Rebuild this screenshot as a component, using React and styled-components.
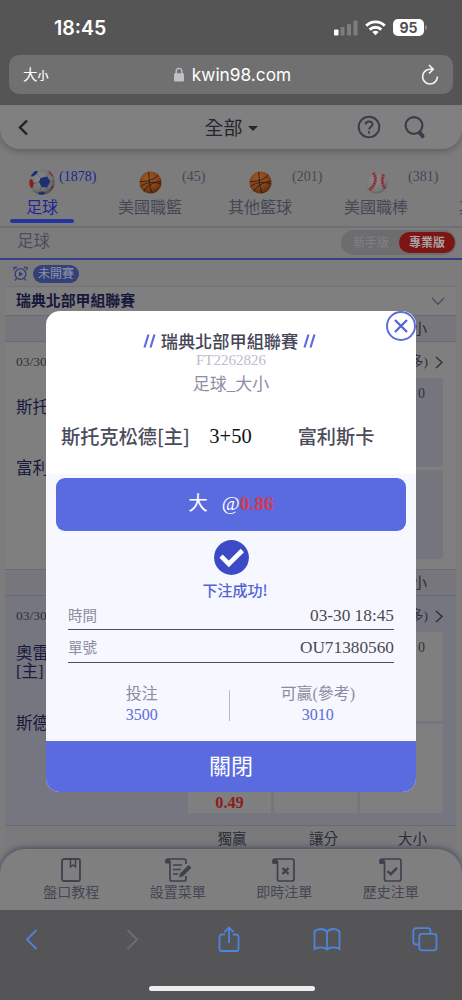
import React from "react";
import styled, { createGlobalStyle } from "styled-components";

export default function App() {
  const sports = [
    { name: "足球", count: 1878, ball: <SoccerBall />, gap: 44, active: true },
    { name: "美國職籃", count: 45, ball: <BasketBall />, gap: 46 },
    { name: "其他籃球", count: 201, ball: <BasketBall />, gap: 52 },
    { name: "美國職棒", count: 381, ball: <BaseBall />, gap: 51 },
    { name: "其他棒球", gap: 0 },
  ];

  const menus = [
    { name: "盤口教程", icon: <GuideIcon /> },
    { name: "設置菜單", icon: <EditIcon /> },
    { name: "即時注單", icon: <ScrollIcon mark="M12.500 11l6 6M18.500 11l-6 6" /> },
    { name: "歷史注單", icon: <ScrollIcon mark="M10.500 14l3.300 3.200 6.200-6.400" /> },
  ];

  return (
    <Phone>
      <GlobalStyle />
      <StatusBar>
        <Clock>18:45</Clock>
        <SignalGroup>
          <SignalIcon />
          <WifiIcon />
          <Battery>95</Battery>
        </SignalGroup>
      </StatusBar>
      <AddressWrap>
        <AddressBar>
          <TextSize>
            大<small>小</small>
          </TextSize>
          <Domain>
            <LockIcon />
            kwin98.com
          </Domain>
          <ReloadIcon />
        </AddressBar>
      </AddressWrap>

      <Site>
        <TopBar>
          <svg width="12" height="17" viewBox="0 0 12 17" fill="none" stroke="#20212b" strokeWidth="2.4">
            <path d="M10 1.5L3 8.5l7 7" />
          </svg>
          <TopTitle>
            全部
            <Caret />
          </TopTitle>
          <TopIcons>
            <HelpIcon />
            <SearchIcon />
          </TopIcons>
        </TopBar>

        <SportTabs>
          {sports.map((sport) => (
            <SportTab key={sport.name} $gap={sport.gap} $active={sport.active}>
              <BallBox>{sport.ball}</BallBox>
              {sport.name}
              {sport.count && <Count $active={sport.active}>({sport.count})</Count>}
            </SportTab>
          ))}
        </SportTabs>

        <SportHead>
          足球
          <Switch>
            <SwitchItem>新手版</SwitchItem>
            <SwitchItem $on>專業版</SwitchItem>
          </Switch>
        </SportHead>

        <StateRow>
          <AlarmIcon />
          <StatePill>未開賽</StatePill>
        </StateRow>
        <League>
          瑞典北部甲組聯賽
          <svg width="14" height="9" viewBox="0 0 14 9" fill="none" stroke="#4c4d5e" strokeWidth="1.3">
            <path d="M1 1l6 6.3L13 1" />
          </svg>
        </League>

        <ColumnHead />
        <Match home="斯托克松德" away="富利斯卡" />
        <ColumnHead />
        <Match home="奧雷布洛" host away="斯德哥爾摩" odds="0.49" tinted />
        <ColumnHead last />

        <BottomMenu>
          {menus.map((menu) => (
            <MenuItem key={menu.name}>
              {menu.icon}
              {menu.name}
            </MenuItem>
          ))}
        </BottomMenu>
      </Site>

      <Toolbar>
        <ToolIcons>
          <svg width="13" height="21" viewBox="0 0 13 21" stroke="#4d84dc">
            <path d="M11.5 1L2 10.5l9.5 9.5" />
          </svg>
          <svg width="13" height="21" viewBox="0 0 13 21" stroke="#6f6f72">
            <path d="M1.5 1l9.5 9.5L1.5 20" />
          </svg>
          <svg width="22" height="27" viewBox="0 0 22 27" stroke="#4d84dc">
            <path d="M7 8.5H3.5a2 2 0 00-2 2V23a2 2 0 002 2h15a2 2 0 002-2V10.500a2 2 0 00-2-2H15M11 17V1.800M6.500 6L11 1.500 15.500 6" />
          </svg>
          <svg width="28" height="23" viewBox="0 0 28 23" stroke="#4d84dc">
            <path d="M14 4C12.500 2 10.500 1 7.800 1S3 2 1.500 3.500V21c1.500-1 3.500-1.700 6-1.700s5 .7 6.500 2.200c1.500-1.500 4-2.200 6.500-2.200s4.500.7 6 1.700V3.500C25 2 22.900 1 20.200 1S15.500 2 14 4zM14 4v17" />
          </svg>
          <svg width="26" height="25" viewBox="0 0 26 25" stroke="#4d84dc">
            <path d="M7 17.500H4.300a3 3 0 01-3-3V4.200a3 3 0 013-3h11.200a3 3 0 013 3v2.300" />
            <rect x="7.300" y="6.800" width="17.200" height="16.500" rx="2.500" />
          </svg>
        </ToolIcons>
        <HomeBar />
      </Toolbar>

      <Modal>
        <CloseButton>
          <svg width="14" height="14" viewBox="0 0 14 14" stroke="#5163d4" strokeWidth="2.2">
            <path d="M1 1l12 12M13 1L1 13" />
          </svg>
        </CloseButton>
        <ModalTop>
          <ModalTitle>
            <Slashes />
            瑞典北部甲組聯賽
            <Slashes />
          </ModalTitle>
          <TicketNo>FT2262826</TicketNo>
          <PlayType>足球_大小</PlayType>
          <Versus>
            <Team $width={129}>斯托克松德[主]</Team>
            <Line>3+50</Line>
            <Team>富利斯卡</Team>
          </Versus>
        </ModalTop>
        <ModalBody>
          <Pick>
            大<At>@</At>
            <b>0.86</b>
          </Pick>
          <Success>
            <svg width="35" height="35" viewBox="0 0 35 35">
              <circle cx="17.500" cy="17.500" r="17.400" fill="#3a4bc5" />
              <path d="M7 16.200l7.800 7.800L28.300 10.500" fill="none" stroke="#fff" strokeWidth="4.600" />
            </svg>
            下注成功!
          </Success>
          <Info>
            時間<span>03-30 18:45</span>
          </Info>
          <Info>
            單號<span>OU71380560</span>
          </Info>
          <Amounts>
            <Amount>
              投注<b>3500</b>
            </Amount>
            <Amount>
              可贏(參考)<b>3010</b>
            </Amount>
          </Amounts>
        </ModalBody>
        <ModalClose>關閉</ModalClose>
      </Modal>
    </Phone>
  );
}

function ColumnHead({ last }) {
  return (
    <Columns $last={last}>
      <span>獨贏</span>
      <span>讓分</span>
      <span>大小</span>
    </Columns>
  );
}

function Match({ home, away, host, odds, tinted }) {
  return (
    <MatchCard $tinted={tinted}>
      <MatchMeta>
        03/30
        <More>
          (更多)
          <svg width="8" height="13" viewBox="0 0 8 13" fill="none" stroke="#30303a" strokeWidth="1.500">
            <path d="M1 1l6 5.500L1 12" />
          </svg>
        </More>
      </MatchMeta>
      <MatchBody>
        <Teams>
          <TeamName $host={host}>
            {home}
            {host && <div>[主]</div>}
          </TeamName>
          <TeamName>{away}</TeamName>
        </Teams>
        <Cells>
          <Cell $tinted={!tinted} />
          <Cell $tinted={!tinted} />
          <Cell $tinted={!tinted}>0</Cell>
          <Cell $tinted={!tinted}>{odds && <Odds>{odds}</Odds>}</Cell>
          <Cell $tinted={!tinted} />
          <Cell $tinted={!tinted} />
        </Cells>
      </MatchBody>
    </MatchCard>
  );
}

const Slashes = () => (
  <svg width="13" height="14" viewBox="0 0 13 14" stroke="#5b6de0" strokeWidth="2.200">
    <path d="M1.500 13.500L5.500.5M7.500 13.500l4-13" />
  </svg>
);

const SignalIcon = () => (
  <svg width="24" height="16" viewBox="0 0 24 16" fill="#7d7d7d">
    <rect x="0" y="9.500" width="4.500" height="6" rx="1" fill="#fff" />
    <rect x="6.500" y="7" width="4" height="8.500" rx="1" />
    <rect x="13" y="4" width="4" height="11.500" rx="1" />
    <rect x="19.500" y="0.500" width="4" height="15" rx="1" />
  </svg>
);

const WifiIcon = () => (
  <svg width="21" height="16" viewBox="0 0 21 16" fill="none" stroke="#fff" strokeWidth="2.900">
    <path d="M1.200 5.800C6.400.6 14.600.6 19.800 5.800M4.700 9.600c3.200-3.200 8.400-3.200 11.600 0" />
    <path d="M10.500 15.300l-3.200-3.200c1.800-1.700 4.600-1.700 6.400 0z" fill="#fff" stroke="none" />
  </svg>
);

const LockIcon = () => (
  <svg width="10" height="15" viewBox="0 0 10 15">
    <path d="M2.200 7V4.200a2.800 2.800 0 015.600 0V7" fill="none" stroke="#c0c0c6" strokeWidth="1.400" />
    <rect x="0" y="6.300" width="10" height="8.200" rx="1.300" fill="#c0c0c6" />
  </svg>
);

const ReloadIcon = () => (
  <svg width="18" height="21" viewBox="0 0 18 21" fill="none" stroke="#f4f4f4" strokeWidth="1.600">
    <path d="M11.500 5.200H9a7.400 7.400 0 107.400 7.400M8 1l4.300 4.200L8 9.400" />
  </svg>
);

const HelpIcon = () => (
  <svg width="24" height="24" viewBox="0 0 24 24" fill="none" stroke="#3b3d4a" strokeWidth="2">
    <circle cx="12" cy="12" r="10.300" />
    <path d="M8.600 9.600c0-4.200 6.900-4.200 6.900-.3 0 2.500-3.400 2.600-3.400 5.200M12 16.300v2.300" />
  </svg>
);

const SearchIcon = () => (
  <svg width="22" height="24" viewBox="0 0 22 24" fill="none" stroke="#3b3d4a" strokeWidth="2.200">
    <circle cx="10" cy="10.500" r="8.400" />
    <path d="M15.600 17.500l3 3.600" strokeWidth="4" strokeLinecap="round" />
  </svg>
);

const AlarmIcon = () => (
  <svg width="15" height="16" viewBox="0 0 15 16" fill="none" stroke="#353d78" strokeWidth="1.300">
    <circle cx="7.500" cy="8" r="5.400" />
    <path d="M1 4.200V1.500h3M14 4.200V1.500h-3M3.500 12.500L2 14.500M11.500 12.500l1.500 2" />
    <path d="M6 5.500v5L10 8z" fill="#353d78" stroke="none" />
  </svg>
);

const SoccerBall = () => (
  <svg width="26" height="26" viewBox="0 0 26 26">
    <defs>
      <radialGradient id="soccer" cx="0.4" cy="0.35" r="0.7">
        <stop offset="0" stopColor="#888" />
        <stop offset="0.7" stopColor="#717174" />
        <stop offset="1" stopColor="#424246" />
      </radialGradient>
      <clipPath id="soccerClip">
        <circle cx="13" cy="13" r="12.700" />
      </clipPath>
    </defs>
    <g clipPath="url(#soccerClip)">
      <rect width="26" height="26" fill="url(#soccer)" />
      <path d="M11.500 9l6.500-1.500 3.500 5L18 18.500l-5.500-.5-2.500-5z" fill="#1d3170" />
      <path d="M1 7l3-5h5L7.500 5 4 7.500zM9.500 23l5-.5 2 1.500-2 2h-5z" fill="#1d3170" />
      <path d="M0 11l3-1 2 4.500L3.500 19l-3.500-1zM18.500 1l4 1.500L25 9l-3.500-3.500zM25.500 17l-4 5 1-4.500z" fill="#8b1c22" />
      <path d="M7.500 5l4 4M18 7.500l2-3M21.500 12.500l4-1M18 18.500l1.500 3.500M12.500 18l-2 5M10 13l-5 1.500" fill="none" stroke="#55555b" strokeWidth="0.700" />
    </g>
  </svg>
);

const BasketBall = () => (
  <svg width="23" height="23" viewBox="0 0 23 23">
    <defs>
      <radialGradient id="basket" cx="0.4" cy="0.3" r="0.8">
        <stop offset="0" stopColor="#98592b" />
        <stop offset="0.6" stopColor="#814119" />
        <stop offset="1" stopColor="#4a210b" />
      </radialGradient>
    </defs>
    <circle cx="11.500" cy="11.500" r="11" fill="url(#basket)" />
    <path d="M.8 10.500C8 11 15 8.500 19.500 4M9.500.800c1 5 0 15 4 21.400M1.500 15.500C8 10.500 16 10.500 22 13M5 20.500c2-5 8-9 17-10.500" fill="none" stroke="#26150e" strokeWidth="0.800" />
  </svg>
);

const BaseBall = () => (
  <svg width="23" height="23" viewBox="0 0 23 23">
    <defs>
      <radialGradient id="base" cx="0.45" cy="0.4" r="0.65">
        <stop offset="0" stopColor="#8d8b8a" />
        <stop offset="0.750" stopColor="#797777" />
        <stop offset="1" stopColor="#5a5759" />
      </radialGradient>
    </defs>
    <circle cx="11.500" cy="11.500" r="11" fill="url(#base)" />
    <path d="M8 2c4.500 5 2.500 12-3.500 17M18.500 3.500c-2 5-1.500 9 1.500 14" fill="none" stroke="#92353d" strokeWidth="3.200" strokeDasharray="1.800 0.800" />
    <path d="M8 2c4.500 5 2.500 12-3.500 17M18.500 3.500c-2 5-1.500 9 1.500 14" fill="none" stroke="#832c34" strokeWidth="0.900" />
  </svg>
);

const GuideIcon = () => (
  <svg width="28" height="26" viewBox="0 0 28 26" fill="none" stroke="#3f414e" strokeWidth="1.800">
    <rect x="5" y="2" width="18" height="22" rx="2" />
    <path d="M13.500 2v8l2.500-2 2.500 2V2" strokeWidth="1.500" />
  </svg>
);

const EditIcon = () => (
  <svg width="28" height="26" viewBox="0 0 28 26" fill="none" stroke="#3f414e" strokeWidth="1.700">
    <path d="M2 6V4a2 2 0 012-2h16a2 2 0 012 2v3M22 19v3a2 2 0 01-2 2H8a2 2 0 01-2-2V4" />
    <path d="M2 2h4v4.500H1.500z" fill="#3f414e" stroke="none" />
    <path d="M9 8h9M9 12.500h8M9 17h5" />
    <path d="M15 20.500l1-4L24.500 8l3 2.800-8.500 8.500z" fill="#3f414e" stroke="none" />
  </svg>
);

const ScrollIcon = ({ mark }) => (
  <svg width="28" height="26" viewBox="0 0 28 26" fill="none" stroke="#3f414e" strokeWidth="1.700">
    <path d="M3 6V4a2 2 0 012-2h17a2 2 0 012 2v18a2 2 0 01-2 2H9.500a2 2 0 01-2-2V4" />
    <path d="M3 2h4.500v5H2.500z" fill="#3f414e" stroke="none" />
    <path d={mark} strokeWidth="2.400" />
  </svg>
);

const GlobalStyle = createGlobalStyle`
  * {
    box-sizing: border-box;
  }
  body {
    margin: 0;
    background: #555557;
  }
  svg {
    display: block;
    flex-shrink: 0;
  }
`;

const Phone = styled.div`
  position: relative;
  width: 462px;
  height: 1000px;
  overflow: hidden;
  background: #555556;
  font-family: "Liberation Serif", "Noto Sans CJK TC", serif;
`;

const StatusBar = styled.div`
  display: flex;
  align-items: center;
  justify-content: space-between;
  height: 55px;
  padding: 0 36px 0 54px;
  color: #fff;
  font-family: Inter, "Liberation Sans", sans-serif;
`;

const Clock = styled.div`
  font-size: 19.500px;
  font-weight: 600;
  line-height: 24px;
`;

const SignalGroup = styled.div`
  display: flex;
  align-items: center;
  gap: 7px;
`;

const Battery = styled.div`
  position: relative;
  width: 31px;
  height: 17px;
  margin-right: 2px;
  border-radius: 5px;
  background: #fff;
  color: #515151;
  font-size: 14px;
  font-weight: 700;
  line-height: 17px;
  text-align: center;

  &::after {
    content: "";
    position: absolute;
    top: 6px;
    right: -3px;
    width: 2px;
    height: 5px;
    border-radius: 0 2px 2px 0;
    background: #8a8a8a;
  }
`;

const AddressWrap = styled.div`
  height: 50px;
  padding: 0 9px;
`;

const AddressBar = styled.div`
  display: grid;
  grid-template-columns: 1fr auto 1fr;
  align-items: center;
  height: 39px;
  padding: 0 14px;
  border-radius: 10px;
  background: #707070;
  color: #fff;
  font-family: "Noto Sans CJK TC", sans-serif;

  > svg {
    justify-self: end;
  }
`;

const TextSize = styled.div`
  font-size: 14.500px;
  line-height: 20px;

  small {
    font-size: 11px;
    font-weight: 500;
  }
`;

const Domain = styled.div`
  display: flex;
  align-items: center;
  gap: 8px;
  padding-left: 3px;
  font-family: Inter, "Liberation Sans", sans-serif;
  font-size: 17.300px;
  line-height: 24px;
`;

const Site = styled.div`
  display: flex;
  flex-direction: column;
  height: 805px;
  overflow: hidden;
  background: #7c7c7d;
`;

const TopBar = styled.div`
  display: grid;
  grid-template-columns: 1fr auto 1fr;
  align-items: center;
  flex-shrink: 0;
  height: 44px;
  padding: 0 17px;
  border-radius: 0 0 20px 20px;
  background: #808080;
  box-shadow: 0 2px 7px #5c5c5e;
  z-index: 1;
`;

const TopTitle = styled.div`
  display: flex;
  align-items: center;
  gap: 5px;
  padding-top: 3px;
  color: #24252f;
  font-size: 19px;
  line-height: 24px;
`;

const Caret = styled.i`
  border: 5.500px solid transparent;
  border-top-color: #24252f;
  border-bottom: 0;
`;

const TopIcons = styled.div`
  display: flex;
  justify-content: flex-end;
  gap: 23px;
  margin-right: 19px;
`;

const SportTabs = styled.div`
  display: flex;
  flex-shrink: 0;
  height: 79px;
  padding: 18px 0 4px 10px;
  overflow: hidden;
  border-bottom: 2px solid #707072;
`;

const SportTab = styled.div`
  position: relative;
  flex: 0 0 64px;
  height: 57px;
  margin-right: ${(props) => props.$gap}px;
  color: ${(props) => (props.$active ? "#1d2599" : "#454754")};
  font-size: 16px;
  line-height: 22px;
  text-align: center;
  white-space: nowrap;

  &::after {
    content: "";
    display: ${(props) => (props.$active ? "block" : "none")};
    height: 4px;
    border-radius: 2px;
    background: #2434a0;
  }
`;

const BallBox = styled.div`
  display: flex;
  align-items: center;
  justify-content: center;
  height: 30px;
`;

const Count = styled.span`
  position: absolute;
  top: -1px;
  left: ${(props) => (props.$active ? 49 : 64)}px;
  font-size: 14px;
  line-height: 22px;
`;

const SportHead = styled.div`
  display: flex;
  align-items: center;
  justify-content: space-between;
  flex-shrink: 0;
  height: 32px;
  padding: 0 6px 2px 17px;
  border-bottom: 2px solid #343f86;
  color: #4b4d5b;
  font-size: 16.500px;
  line-height: 24px;
`;

const Switch = styled.div`
  display: flex;
  align-items: center;
  justify-content: space-between;
  width: 115px;
  height: 25px;
  padding: 0 1px 0 2px;
  border-radius: 13px;
  background: #6d6d70;
`;

const SwitchItem = styled.div`
  width: 56px;
  height: 21px;
  border-radius: 11px;
  background: ${(props) => (props.$on ? "#7c1514" : "none")};
  color: ${(props) => (props.$on ? "#a9a3a3" : "#818184")};
  font-size: 12px;
  font-weight: ${(props) => (props.$on ? 700 : 400)};
  line-height: 23px;
  text-align: center;
`;

const StateRow = styled.div`
  display: flex;
  align-items: center;
  gap: 5px;
  flex-shrink: 0;
  height: 26px;
  padding: 1px 0 0 13px;
`;

const StatePill = styled.div`
  width: 46px;
  height: 18px;
  border-radius: 9px;
  background: #344078;
  color: #8f94a8;
  font-size: 12px;
  line-height: 19px;
  text-align: center;
`;

const League = styled.div`
  display: flex;
  align-items: center;
  justify-content: space-between;
  flex-shrink: 0;
  height: 30px;
  margin: 0 6px 0 5px;
  padding: 0 11px;
  border-top: 1px solid #72727c;
  border-bottom: 1px solid #6a6a72;
  background: #7f7f7f;
  color: #16183c;
  font-size: 14.900px;
  font-weight: 700;
  line-height: 24px;
`;

const Columns = styled.div`
  display: grid;
  grid-template-columns: 92px 91px 87px;
  justify-content: end;
  flex-shrink: 0;
  height: ${(props) => (props.$last ? 40 : 26)}px;
  margin: 0 6px ${(props) => (props.$last ? -17 : 0)}px 5px;
  border-bottom: 1px solid #696a77;
  background: ${(props) => (props.$last ? "#7a7a7d" : "#76767c")};
  color: #2b2c36;
  font-size: 14.500px;
  line-height: 27px;
  text-align: center;
`;

const MatchCard = styled.div`
  flex-shrink: 0;
  height: ${(props) => (props.$tinted ? 230 : 228)}px;
  margin: 0 6px 0 5px;
  padding: 0 13px 0 11px;
  border-bottom: 1px solid #696a77;
  background: ${(props) => (props.$tinted ? "#75767f" : "#7f7f7f")};
`;

const MatchMeta = styled.div`
  display: flex;
  justify-content: space-between;
  height: 36px;
  padding-top: 8px;
  color: #30303a;
  font-size: 13.500px;
  line-height: 24px;
`;

const More = styled.div`
  display: flex;
  align-items: center;
  gap: 7px;
  height: 24px;
`;

const MatchBody = styled.div`
  display: flex;
  justify-content: space-between;
`;

const Teams = styled.div`
  width: 150px;
  padding-top: 13px;
`;

const TeamName = styled.div`
  height: ${(props) => (props.$host ? 62 : 61)}px;
  padding-top: ${(props) => (props.$host ? 0 : 8)}px;
  color: #191a3d;
  font-size: 16.500px;
  line-height: 18px;
`;

const Cells = styled.div`
  display: grid;
  grid-template-columns: repeat(3, 83px);
  grid-auto-rows: 89px;
  gap: 3px;
`;

const Cell = styled.div`
  padding: 5px 18px 0 0;
  background: ${(props) => (props.$tinted ? "#74757d" : "#7f7f7f")};
  color: #30303a;
  font-size: 14px;
  line-height: 22px;
  text-align: right;
`;

const Odds = styled.div`
  width: 83px;
  padding-top: 63px;
  color: #8b1e1c;
  font-size: 16.300px;
  font-weight: 700;
  text-align: center;
`;

const BottomMenu = styled.div`
  display: grid;
  grid-template-columns: repeat(4, 106.500px);
  justify-content: center;
  flex-shrink: 0;
  height: 61px;
  margin-top: auto;
  padding-top: 8px;
  border-radius: 25px 25px 0 0;
  background: #7f7f7f;
  box-shadow: 0 -1px 6px #45465a;
  z-index: 1;
`;

const MenuItem = styled.div`
  display: flex;
  flex-direction: column;
  align-items: center;
  color: #444655;
  font-size: 14px;
  line-height: 19px;
`;

const Toolbar = styled.div`
  height: 90px;
  padding: 15px 24px 0 25px;
  background: #555557;
`;

const ToolIcons = styled.div`
  display: grid;
  grid-template-columns: 100.500px 92.500px 95px 99px 26px;
  align-items: center;
  height: 29px;
  fill: none;
  stroke-width: 1.800;
`;

const HomeBar = styled.div`
  width: 166px;
  height: 5px;
  margin: 32px auto 0;
  border-radius: 3px;
  background: #eee;
`;

const Modal = styled.div`
  position: absolute;
  top: 311px;
  left: 46px;
  width: 370px;
  height: 481px;
  overflow: hidden;
  border-radius: 14px;
  background: #fff;
  z-index: 2;
`;

const CloseButton = styled.div`
  position: absolute;
  top: 0;
  right: 0;
  display: flex;
  align-items: center;
  justify-content: center;
  width: 30px;
  height: 30px;
  border: 2.500px solid #5b6de0;
  border-radius: 50%;
`;

const ModalTop = styled.div`
  height: 163px;
  padding-top: 18px;
  text-align: center;
`;

const ModalTitle = styled.div`
  display: flex;
  align-items: center;
  justify-content: center;
  gap: 5px;
  margin-left: -3px;
  color: #454657;
  font-family: "Noto Sans CJK TC", sans-serif;
  font-size: 17.200px;
  font-weight: 500;
  line-height: 24px;
`;

const TicketNo = styled.div`
  color: #bcbdca;
  font-size: 15px;
  line-height: 14px;
`;

const PlayType = styled.div`
  padding-top: 6px;
  color: #8c8fa6;
  font-size: 17px;
  line-height: 24px;
`;

const Versus = styled.div`
  display: flex;
  align-items: center;
  height: 28px;
  margin-top: 25px;
  padding-left: 15px;
`;

const Team = styled.div`
  width: ${(props) => props.$width || 78}px;
  color: #4b4c5b;
  font-family: "Noto Sans CJK TC", sans-serif;
  font-size: 19.200px;
  font-weight: 500;
  line-height: 28px;
  white-space: nowrap;
`;

const Line = styled.div`
  width: 43px;
  margin: 0 45px 0 19px;
  color: #111;
  font-size: 20.500px;
  line-height: 28px;
`;

const ModalBody = styled.div`
  height: 267px;
  padding: 3.500px 10px 0;
  background: #f6f7ff;
`;

const Pick = styled.div`
  height: 53.500px;
  border-radius: 9px;
  background: #5a6be0;
  color: #fff;
  font-size: 19.500px;
  line-height: 52px;
  text-align: center;

  b {
    color: #d43b4e;
  }
`;

const At = styled.span`
  margin-left: 14px;
`;

const Success = styled.div`
  display: flex;
  flex-direction: column;
  align-items: center;
  gap: 4px;
  height: 66.500px;
  padding-top: 8.500px;
  padding-left: 8px;
  color: #5163d4;
  font-family: "Noto Sans CJK TC", sans-serif;
  font-size: 15px;
  font-weight: 500;
  line-height: 22px;

  svg {
    margin-left: -8px;
  }
`;

const Info = styled.div`
  display: flex;
  justify-content: space-between;
  height: 32.500px;
  margin: 0 12px;
  padding-top: 6px;
  border-bottom: 1.500px solid #505055;
  color: #8a8ca0;
  font-size: 14.500px;
  line-height: 24px;

  span {
    color: #4b4b52;
    font-size: 17.300px;
  }
`;

const Amounts = styled.div`
  display: flex;
  margin: 27px 0 0 -1px;
`;

const Amount = styled.div`
  display: flex;
  flex-direction: column;
  align-items: center;
  width: 174px;
  height: 31px;
  color: #8a8ca0;
  font-size: 16px;
  line-height: 21px;

  & + & {
    width: 178px;
    border-left: 1.500px solid #b9bbc9;
  }

  &::before {
    content: "";
    margin-top: -7px;
  }

  b {
    color: #5b6cda;
    font-weight: 400;
  }
`;

const ModalClose = styled.div`
  height: 51px;
  background: #5a6be0;
  color: #fff;
  font-size: 22px;
  line-height: 51px;
  text-align: center;
`;
